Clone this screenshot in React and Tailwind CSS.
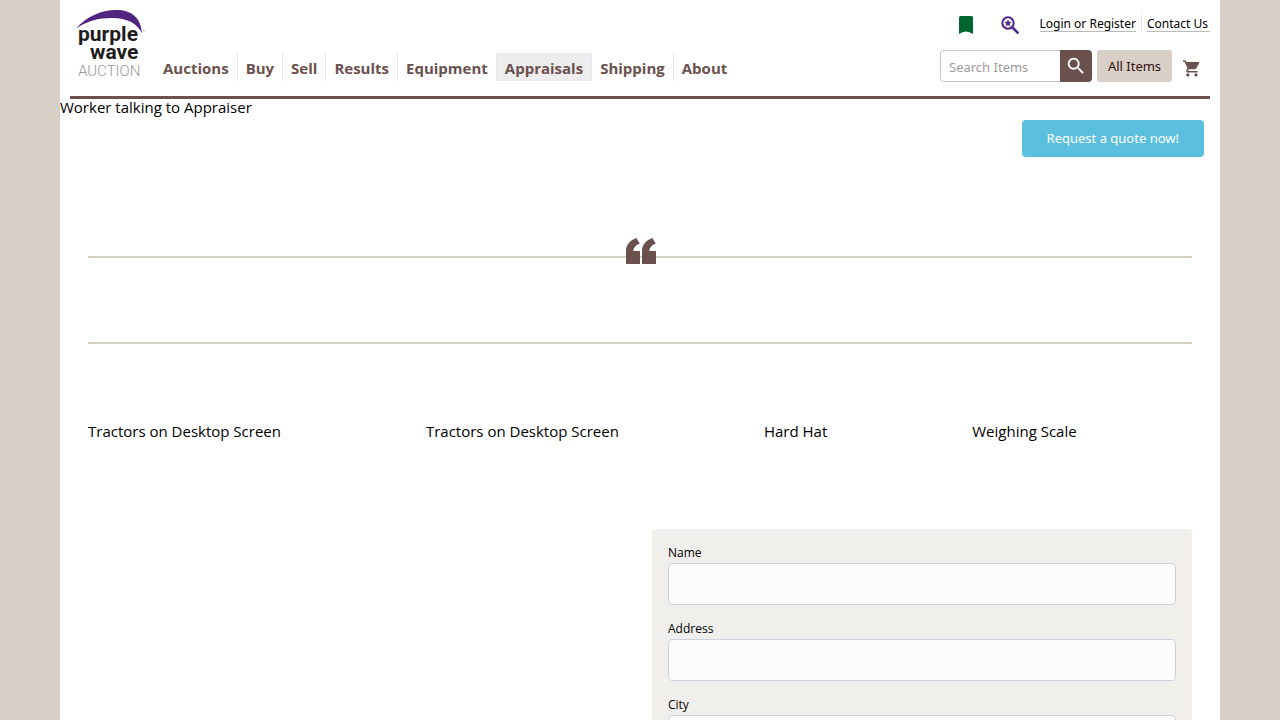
const navItems = ['Auctions', 'Buy', 'Sell', 'Results', 'Equipment', 'Appraisals', 'Shipping', 'About'];

function Logo() {
  return (
    <a href="#" aria-label="Purple Wave Auction" className="block shrink-0">
      <svg width="70" height="70" viewBox="0 0 70 70" fontFamily="Roboto, sans-serif">
        <path d="M0 18.500C10 7 25 0 40 0c16 0 25 8 26 23.500C61 13 51 8 36 8 22 8 11 11 0 18.500z" fill="#51247f" />
        <text fontSize="21" fontWeight="700" fill="#1f1c1d">
          <tspan x="2" y="31">purple</tspan>
          <tspan x="14" y="49">wave</tspan>
        </text>
        <text x="2" y="66" fontSize="15" fontWeight="300" fill="#999999">AUCTION</text>
        <circle cx="68" cy="21" r="0.7" fill="#aaaaaa" />
      </svg>
    </a>
  );
}

function Header() {
  return (
    <header className="mx-[10px] flex h-[99px] justify-between border-b-3 border-[#6a514d]">
      <div className="flex pt-[10px] pl-[6px]">
        <Logo />
        <nav className="mt-[43px] ml-[9px] flex h-7 font-['Open_Sans',sans-serif] text-[15px] leading-[30px] font-bold text-[#6a514d]">
          {navItems.map((item) => (
            <a
              key={item}
              href="#"
              className={
                item === 'Appraisals'
                  ? 'border-r border-[#e6e6f0] bg-[#ededed] px-2'
                  : 'border-r border-[#e6e6f0] px-2 last:border-r-0'
              }
            >
              {item}
            </a>
          ))}
        </nav>
      </div>
      <div className="flex flex-col items-end pt-[14px]">
        <div className="flex h-[18px] items-center text-xs text-black">
          <a href="#" aria-label="Bookmarks" className="mr-[26px]">
            <svg width="18" height="20" viewBox="0 0 18 20" className="mt-1">
              <path d="M2 2.500A1.500 1.500 0 0 1 3.500 1h11A1.500 1.500 0 0 1 16 2.500V19q-7-5-14 0z" fill="#036630" />
            </svg>
          </a>
          <a href="#" aria-label="Saved searches" className="mr-[20px]">
            <svg width="19" height="19" viewBox="0 0 19 19" className="mt-1" fill="none" stroke="#51258a">
              <circle cx="7" cy="7" r="5.700" strokeWidth="2" />
              <path d="M11.300 11.300l6 6" strokeWidth="2.600" />
              <path d="M7 3.200l1 2.500 2.700.2-2 1.800.6 2.700L7 9l-2.300 1.400.6-2.700-2-1.800 2.700-.2z" fill="#51258a" stroke="none" />
            </svg>
          </a>
          <a href="#" className="mt-px border-b border-[#bbbbbb] pt-px leading-[14px]">Login or Register</a>
          <span className="mx-[5px] h-[18px] w-px bg-[#e3e3e3]" />
          <a href="#" className="mt-px border-b border-[#bbbbbb] pt-px pr-[2px] leading-[14px]">Contact Us</a>
        </div>
        <form className="mt-[18px] flex h-8 items-center text-[13px]" onSubmit={(e) => e.preventDefault()}>
          <input
            type="search"
            aria-label="Search Items"
            placeholder="Search Items"
            className="h-8 w-[120px] rounded-l border border-r-0 border-[#c8c8c8] bg-white px-2 pt-px placeholder:text-[#9c9c9c]"
          />
          <button type="submit" aria-label="Search" className="flex h-8 w-8 items-center justify-center rounded-r bg-[#6a514d] text-white">
            <svg width="22" height="22" viewBox="0 0 24 24" fill="currentColor">
              <path d="M15.500 14h-.79l-.28-.27A6.471 6.471 0 0 0 16 9.500 6.500 6.500 0 1 0 9.500 16c1.610 0 3.090-.59 4.230-1.570l.27.28v.79l5 4.990L20.490 19l-4.990-5zm-6 0C7.010 14 5 11.990 5 9.500S7.010 5 9.500 5 14 7.010 14 9.500 11.990 14 9.500 14z" />
            </svg>
          </button>
          <button type="button" className="ml-[5px] h-8 w-[75px] rounded-[3px] bg-[#d8cfc6] pt-[2px] text-[#33100f]">All Items</button>
          <a href="#" aria-label="Cart" className="mr-[10px] ml-[11px] text-[#6a514d]">
            <svg width="17" height="17" viewBox="1 2 21 20" fill="currentColor" className="mt-1">
              <path d="M7 18c-1.100 0-1.990.9-1.990 2S5.900 22 7 22s2-.9 2-2-.9-2-2-2zM1 2v2h2l3.600 7.590-1.350 2.450c-.16.280-.25.610-.25.960 0 1.100.9 2 2 2h12v-2H7.420c-.14 0-.25-.11-.25-.25l.03-.12.9-1.630h7.450c.75 0 1.410-.41 1.750-1.030l3.580-6.490A1.003 1.003 0 0 0 20 4H5.210l-.94-2H1zm16 16c-1.100 0-1.990.9-1.990 2s.89 2 1.990 2 2-.9 2-2-.9-2-2-2z" />
            </svg>
          </a>
        </form>
      </div>
    </header>
  );
}

function Field({ id, label }) {
  return (
    <div>
      <label htmlFor={id} className="block pb-[2px] text-xs leading-4 text-black">{label}</label>
      <input id={id} name={id} type="text" className="block h-[42px] w-full rounded border border-[#cdd2dd] bg-[#fcfcfc] px-3 text-sm" />
    </div>
  );
}

export default function App() {
  return (
    <div className="h-screen overflow-hidden bg-[#d8cfc6] font-['Noto_Sans',sans-serif]">
      <div className="mx-[60px] min-h-screen bg-white">
        <Header />
        <main className="font-['Open_Sans',sans-serif] text-[15px] text-black">
          <p className="h-[21px] leading-4">Worker talking to Appraiser</p>
          <div className="mr-4 flex justify-end">
            <a href="#quote" className="flex h-[37px] items-center rounded bg-[#5bc0de] px-[25px] pt-px font-['Noto_Sans',sans-serif] text-[13px] text-white">
              Request a quote now!
            </a>
          </div>
          <section className="mx-7 mt-[81px]">
            <div className="flex h-[26px] items-center">
              <span className="mt-3 h-[2px] flex-1 bg-[#d8d2c6]" />
              <svg width="32" height="26" viewBox="-2 0 32 26" fill="#6a514d" aria-hidden="true">
                <path d="M-2 18h34v2H-2z" fill="#d8d2c6" />
                <path d="M0 26V13C0 7 4 2 10.500 0l3.200 5.500C10 7 7.500 9.500 7.300 13H14v13z" />
                <path d="M16 26V13c0-6 4-11 10.500-13l3.200 5.500C26 7 23.500 9.500 23.300 13H30v13z" />
              </svg>
              <span className="mt-3 h-[2px] flex-1 bg-[#d8d2c6]" />
            </div>
            <div className="mt-[78px] h-[2px] bg-[#d8d2c6]" />
          </section>
          <section className="mx-7 mt-[76px] flex gap-[145px] leading-[22px]">
            <p>Tractors on Desktop Screen</p>
            <p>Tractors on Desktop Screen</p>
            <p>Hard Hat</p>
            <p>Weighing Scale</p>
          </section>
          <section className="mx-7 mt-[87px] flex justify-end">
            <form id="quote" className="flex w-[540px] flex-col gap-4 rounded bg-[#f0efeb] px-4 py-4">
              <Field id="name" label="Name" />
              <Field id="address" label="Address" />
              <Field id="city" label="City" />
            </form>
          </section>
        </main>
      </div>
    </div>
  );
}
